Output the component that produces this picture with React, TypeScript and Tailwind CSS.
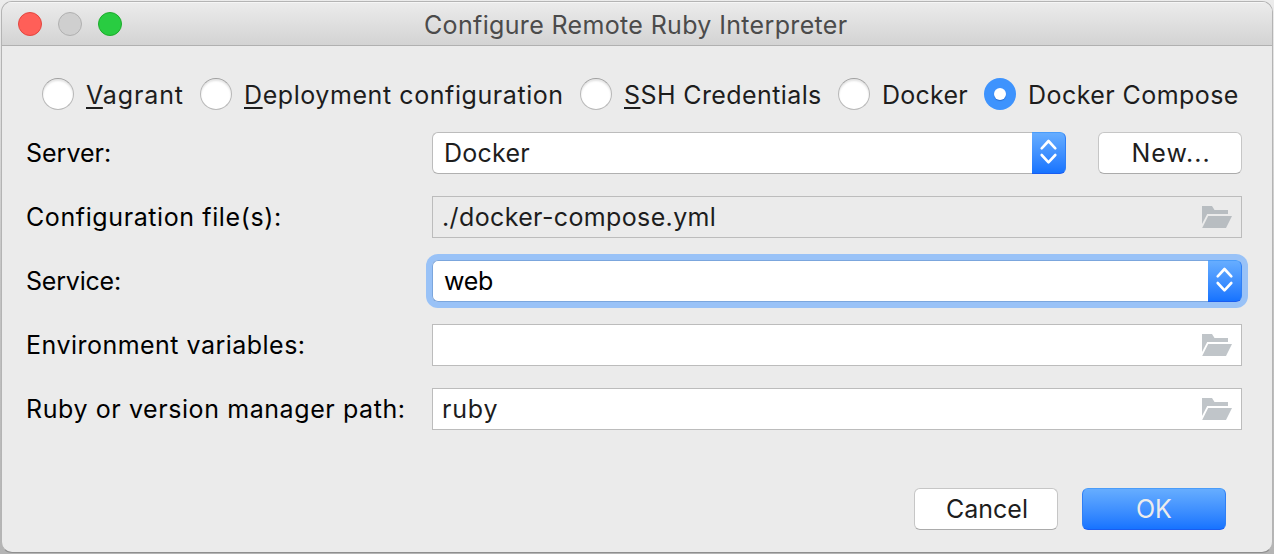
import type { ReactNode } from 'react';

function Radio({ checked, className, children }: { checked?: boolean; className: string; children: ReactNode }) {
  return (
    <label className={`flex items-center shrink-0 whitespace-nowrap text-[#1d1d1d] ${className}`}>
      {checked ? (
        <span className="flex size-8 shrink-0 items-center justify-center rounded-full bg-[#3e93fd]">
          <span className="size-3 rounded-full bg-white shadow-[0_1px_1px_#2a6fd0]" />
        </span>
      ) : (
        <span className="size-8 shrink-0 rounded-full border border-[#b9b9b9] border-t-[#a0a0a0] bg-white shadow-[inset_0_2px_2px_#e4e4e4]" />
      )}
      {children}
    </label>
  );
}

function Mnemonic({ children }: { children: string }) {
  return (
    <span className="underline decoration-2 underline-offset-[2.5px] [text-decoration-skip-ink:none]">{children}</span>
  );
}

function Arrows() {
  return (
    <span className="block h-[42px] w-[34px] shrink-0 rounded-r-[6px] border-y border-r border-t-[#4a9cf9] border-r-[#2f7ff5] border-b-[#1a5df0] bg-linear-to-b from-[#66adff] to-[#1673ff]">
      <svg width="33" height="40" viewBox="0 0 33 40" fill="none" stroke="#fff" strokeWidth="2.6" strokeLinecap="round" strokeLinejoin="round">
        <path d="M9.7 15.3 L16.5 8 L23.3 15.3" />
        <path d="M9.7 22 L16.5 29.3 L23.3 22" />
      </svg>
    </span>
  );
}

function Folder({ className }: { className: string }) {
  return (
    <svg className={`ml-auto shrink-0 ${className}`} width="30" height="22" viewBox="0 0 30 22" fill="currentColor">
      <path d="M0 0 H10 L12.5 4 H26 V8 H5.2 L0 18 Z" />
      <path d="M6.2 10 H30 L24 22 H0.2 Z" />
    </svg>
  );
}

function Row({ label, className, children }: { label: string; className: string; children: ReactNode }) {
  return (
    <div className="flex h-[42px] items-center">
      <div className={`w-[406px] shrink-0 whitespace-nowrap text-black ${className}`}>{label}</div>
      {children}
    </div>
  );
}

const field = 'flex h-[42px] w-[810px] items-center border border-[#bcbcbc] pl-[9px] pr-[9px] text-[#1d1d1d]';
const button =
  'flex h-[42px] w-[144px] shrink-0 items-center rounded-[6px] border border-[#c6c6c6] border-b-[#ababab] bg-white text-[#1d1d1d]';

export default function App() {
  return (
    <div className="h-[554px] w-[1274px] overflow-hidden bg-linear-to-b from-[#ececec] via-[#c4c4c4] to-[#b4b4b4] p-px font-['Inter',sans-serif] text-[25px] leading-[30px]">
      <div className="flex h-[552px] w-[1272px] flex-col overflow-hidden rounded-[11px] border border-[#b4b4b4] border-b-[#8e8e8e] bg-[#ebebeb]">
        <header className="flex h-11 shrink-0 items-start border-b border-[#b0b0b0] bg-linear-to-b from-[#ececec] to-[#d3d3d3] shadow-[inset_0_1px_0_#f6f6f6]">
          <div className="flex gap-4 pt-[10px] pl-4">
            <span className="size-6 rounded-full border border-[#e2463f] bg-[#ff5f58]" />
            <span className="size-6 rounded-full border border-[#b0b0b0] bg-[#cfcfcf]" />
            <span className="size-6 rounded-full border border-[#1dab2b] bg-[#29cc41]" />
          </div>
          <h1 className="mt-2 ml-[302px] whitespace-nowrap tracking-[0.345px] text-[#4b4b4b]">
            Configure Remote Ruby Interpreter
          </h1>
        </header>

        <main className="flex flex-col pl-6">
          <div className="mt-8 ml-4 flex h-8 items-center">
            <Radio className="w-[158px]">
              <span className="mt-[2px] ml-3 tracking-[0.88px]">
                <Mnemonic>V</Mnemonic>agrant
              </span>
            </Radio>
            <Radio className="w-[380px]">
              <span className="mt-[2px] ml-[12px] tracking-[0.575px]">
                <Mnemonic>D</Mnemonic>eployment configuration
              </span>
            </Radio>
            <Radio className="w-[258px]">
              <span className="mt-[2px] ml-3 tracking-[0.4px]">
                <Mnemonic>S</Mnemonic>SH Credentials
              </span>
            </Radio>
            <Radio className="w-[146px]">
              <span className="mt-[2px] ml-[12px] tracking-[0.25px]">Docker</span>
            </Radio>
            <Radio checked className="w-[256px]">
              <span className="mt-[2px] ml-3 tracking-[0.44px]">Docker Compose</span>
            </Radio>
          </div>

          <div className="mt-[22px] flex flex-col gap-[22px]">
            <Row label="Server:" className="">
              <div className="flex h-[42px] w-[634px]">
                <div className="flex h-[42px] w-[600px] items-center rounded-l-[6px] border border-r-0 border-[#bcbcbc] border-b-[#b0b0b0] bg-white pl-[11px] tracking-[0.25px] text-[#1d1d1d]">
                  Docker
                </div>
                <Arrows />
              </div>
              <button className={`${button} ml-8 pl-[32.5px] tracking-[1px]`}>New...</button>
            </Row>
            <Row label="Configuration file(s):" className="tracking-[0.6px]">
              <div className={`${field} tracking-[0.37px]`}>
                ./docker-compose.yml
                <Folder className="text-[#b8bdc1]" />
              </div>
            </Row>
            <Row label="Service:" className="tracking-[-0.2px]">
              <div className="flex h-[42px] w-[810px] rounded-[6px] shadow-[0_0_0_6px_#99c2f7]">
                <div className="flex h-[42px] w-[776px] items-center rounded-l-[6px] border border-r-0 border-[#7ba6dd] bg-white pl-[11px] tracking-[-0.3px] text-black">
                  web
                </div>
                <Arrows />
              </div>
            </Row>
            <Row label="Environment variables:" className="tracking-[0.48px]">
              <div className={`${field} bg-white`}>
                <Folder className="text-[#c0c5c9]" />
              </div>
            </Row>
            <Row label="Ruby or version manager path:" className="tracking-[0.585px]">
              <div className={`${field} bg-white tracking-[0.829px]`}>
                ruby
                <Folder className="text-[#c0c5c9]" />
              </div>
            </Row>
          </div>

          <div className="mt-[58px] flex gap-6 pl-[888px]">
            <button className={`${button} pl-[31px]`}>Cancel</button>
            <button className="flex h-[42px] w-[144px] items-center rounded-[6px] border border-[#2f7ff5] border-t-[#4a9cf9] border-b-[#1a5df0] bg-linear-to-b from-[#66adff] to-[#1673ff] pl-[53px] text-[#ececec]">
              OK
            </button>
          </div>
        </main>
      </div>
    </div>
  );
}
